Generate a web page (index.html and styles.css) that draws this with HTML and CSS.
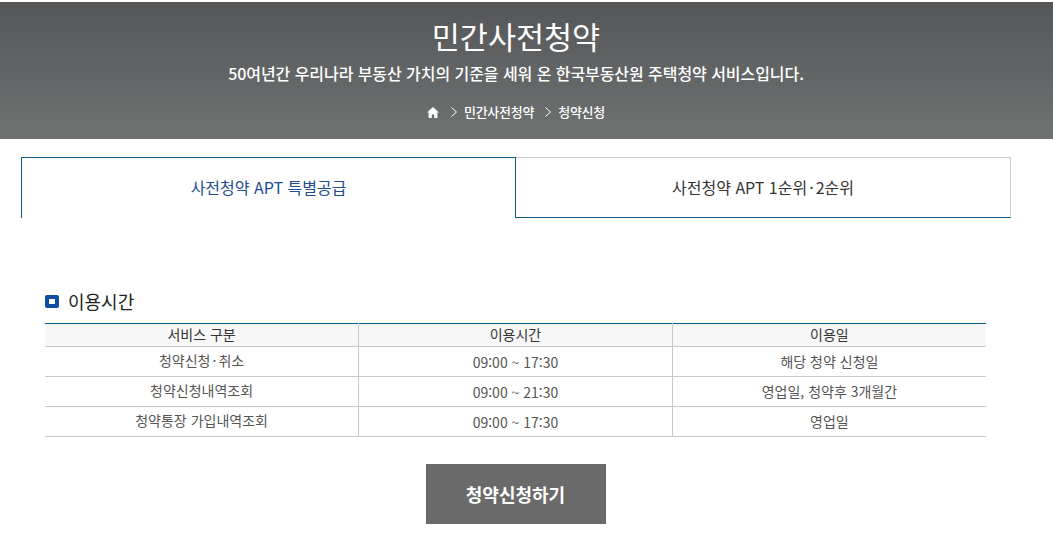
FILE: index.html
```html
<!DOCTYPE html>
<html lang="ko">
<head>
  <meta charset="UTF-8">
  <title>민간사전청약</title>
  <link rel="stylesheet" href="styles.css">
</head>
<body>
  <div class="hero">
    <h1>민간사전청약</h1>
    <p class="hero-sub">50여년간 우리나라 부동산 가치의 기준을 세워 온 한국부동산원 주택청약 서비스입니다.</p>
    <div class="crumbs">
      <svg class="home-icon" viewBox="0 0 12 11" width="12" height="11"><path d="M6 0 L12 5.6 L10.4 5.6 L10.4 11 L7.2 11 L7.2 7.4 L4.8 7.4 L4.8 11 L1.6 11 L1.6 5.6 L0 5.6 Z" fill="#fff"/></svg>
      <svg class="crumb-arrow" viewBox="0 0 6 10" width="6" height="10"><path d="M0.5 0.5 L5.5 5 L0.5 9.5" fill="none" stroke="#fff" stroke-width="1"/></svg>
      <span>민간사전청약</span>
      <svg class="crumb-arrow second" viewBox="0 0 6 10" width="6" height="10"><path d="M0.5 0.5 L5.5 5 L0.5 9.5" fill="none" stroke="#fff" stroke-width="1"/></svg>
      <span>청약신청</span>
    </div>
  </div>

  <div class="tabs">
    <div class="tab active">사전청약 APT 특별공급</div>
    <div class="tab">사전청약 APT 1순위<span class="dot">·</span>2순위</div>
  </div>

  <div class="section">
    <h2 class="section-title"><span class="bullet"></span>이용시간</h2>
    <table class="time-table">
      <thead>
        <tr><th>서비스 구분</th><th>이용시간</th><th>이용일</th></tr>
      </thead>
      <tbody>
        <tr><td>청약신청<span class="dot">·</span>취소</td><td>09:00 ~ 17:30</td><td>해당 청약 신청일</td></tr>
        <tr><td>청약신청내역조회</td><td>09:00 ~ 21:30</td><td>영업일, 청약후 3개월간</td></tr>
        <tr><td>청약통장 가입내역조회</td><td>09:00 ~ 17:30</td><td>영업일</td></tr>
      </tbody>
    </table>
    <div class="actions">
      <a class="apply-btn">청약신청하기</a>
    </div>
  </div>
</body>
</html>
```

FILE: styles.css
```css
* {
  box-sizing: border-box;
  margin: 0;
  padding: 0;
}
body {
  background: #fff;
  font-family: "Noto Sans CJK KR", "Noto Sans", sans-serif;
  color: #333;
  overflow: hidden;
}
.hero {
  margin-top: 2px;
  height: 137px;
  background: linear-gradient(180deg, #555658 0%, #6e7271 100%);
  color: #fff;
  text-align: center;
  padding: 13px 21px 0 0;
}
.hero h1 {
  font-size: 30.5px;
  font-weight: 400;
  line-height: 42px;
}
.hero-sub {
  font-size: 16px;
  font-weight: 500;
  line-height: 24px;
  letter-spacing: -0.06px;
  margin-top: 4px;
}
.crumbs {
  display: flex;
  justify-content: center;
  align-items: center;
  font-size: 13px;
  font-weight: 500;
  line-height: 18px;
  letter-spacing: -0.25px;
  margin-top: 18px;
}
.home-icon {
  margin-right: 12px;
}
.crumb-arrow {
  margin-right: 7px;
}
.crumb-arrow.second {
  margin-left: 11px;
}
.dot {
  margin: 0 2px;
}
.tabs {
  display: flex;
  margin: 18px 0 0 21px;
  width: 990px;
}
.tab {
  width: 495px;
  height: 61px;
  font-size: 16px;
  line-height: 58px;
  text-align: center;
  color: #333;
  border-top: 1px solid #ccc;
  border-right: 1px solid #ccc;
  border-bottom: 1px solid #0f5a85;
}
.tab.active {
  color: #234c8f;
  border: 1px solid #0f5a85;
  border-bottom: none;
}
.section {
  padding: 0 67px 0 45px;
  margin-top: 70px;
}
.section-title {
  display: flex;
  align-items: center;
  font-size: 18px;
  font-weight: 400;
  line-height: 26px;
  color: #222;
}
.bullet {
  width: 14px;
  height: 13px;
  border: 4px solid #0f4ea3;
  border-radius: 2px;
  margin-right: 9px;
}
.time-table {
  width: 941px;
  margin-top: 9px;
  border-collapse: collapse;
  table-layout: fixed;
  border-top: 1px solid #0f5a85;
  font-size: 14px;
}
.time-table th {
  height: 23px;
  padding-bottom: 2px;
  font-weight: 400;
  color: #333;
  background: #f7f7f7;
  border-bottom: 1px solid #c9c9c9;
  border-left: 1px solid #c9c9c9;
}
.time-table td {
  height: 30px;
  text-align: center;
  color: #555;
  border-bottom: 1px solid #c9c9c9;
  border-left: 1px solid #c9c9c9;
}
.time-table td:first-child {
  padding-bottom: 3px;
}
.time-table td:last-child {
  padding-bottom: 1px;
}
.time-table th:first-child,
.time-table td:first-child {
  border-left: none;
}
.actions {
  display: flex;
  justify-content: center;
  margin-top: 27px;
}
.apply-btn {
  display: block;
  width: 180px;
  height: 60px;
  line-height: 60px;
  text-align: center;
  background: #6a6a6a;
  color: #fff;
  font-size: 18px;
  font-weight: 700;
}
```
